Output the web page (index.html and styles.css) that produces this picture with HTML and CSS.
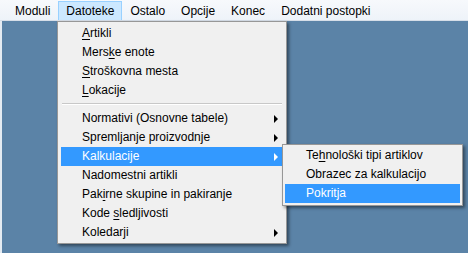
FILE: index.html
```html
<!DOCTYPE html>
<html lang="sl">
<head>
    <meta charset="UTF-8">
    <title>Datoteke</title>
    <link rel="stylesheet" href="styles.css">
</head>
<body>
    <div class="window">
        <div class="menubar">
            <span class="bar-item">Moduli</span>
            <span class="bar-item active">Datoteke</span>
            <span class="bar-item">Ostalo</span>
            <span class="bar-item">Opcije</span>
            <span class="bar-item">Konec</span>
            <span class="bar-item">Dodatni postopki</span>
        </div>
        <div class="desktop"></div>

        <div class="menu main-menu">
            <div class="item"><u>A</u>rtikli</div>
            <div class="item">Mers<u>k</u>e enote</div>
            <div class="item"><u>S</u>troškovna mesta</div>
            <div class="item"><u>L</u>okacije</div>
            <div class="separator"></div>
            <div class="item sub">Normativi (Osnovne tabele)</div>
            <div class="item sub">Spremljanje proizvodnje</div>
            <div class="item sub selected">Kalkulacije</div>
            <div class="item">Nadomestni artikli</div>
            <div class="item">Pak<u>i</u>rne skupine in pakiranje</div>
            <div class="item">Kode <u>s</u>ledljivosti</div>
            <div class="item sub">Koledarji</div>
        </div>

        <div class="menu sub-menu">
            <div class="item">Te<u>h</u>nološki tipi artiklov</div>
            <div class="item">Obrazec za kalkulacijo</div>
            <div class="item selected">Pokritja</div>
        </div>
    </div>
</body>
</html>
```
FILE: styles.css
```css
body {
    margin: 0;
    font-family: "Liberation Sans", Arial, sans-serif;
    font-size: 12px;
    color: #000;
}

.window {
    position: relative;
    width: 468px;
    height: 253px;
    display: flex;
    flex-direction: column;
    background: #5b83a7;
    overflow: hidden;
}

.menubar {
    height: 20px;
    display: flex;
    align-items: stretch;
    padding-left: 7px;
    background: linear-gradient(#f7f9fc, #eef3f9);
    border-bottom: 1px solid #d6dee8;
}

.bar-item {
    display: flex;
    align-items: center;
    padding: 0 7px;
    margin-top: 1px;
    border: 1px solid transparent;
    border-bottom: none;
}

.bar-item.active {
    background: #cce8ff;
    border-color: #99d1ff;
}

.desktop {
    flex: 1;
    border-left: 2px solid #e4ebf2;
}

/* popup menus */
.menu {
    position: absolute;
    background: #f0f0f0;
    border: 1px solid #979797;
    box-shadow: 2px 2px 3px rgba(0, 0, 0, 0.45);
}

.main-menu {
    left: 57px;
    top: 21px;
    width: 221px;
    padding: 2px 4px 1px 3px;
}

.sub-menu {
    left: 282px;
    top: 144px;
    width: 175px;
    padding: 1px 2px 2px 2px;
}

.item {
    position: relative;
    height: 19px;
    line-height: 19px;
    padding-left: 21px;
    white-space: nowrap;
}

.item u {
    text-decoration-thickness: 1px;
    text-underline-offset: 2px;
}

.item.selected {
    background: #3399ff;
    color: #fff;
}

.item.sub::after {
    content: "";
    position: absolute;
    right: 4px;
    top: 6px;
    border-left: 4px solid #000;
    border-top: 4px solid transparent;
    border-bottom: 4px solid transparent;
}

.item.sub.selected::after {
    border-left-color: #fff;
}

.separator {
    height: 1px;
    margin: 3px 0 4px 1px;
    background: #c8c8c8;
    border-bottom: 1px solid #fff;
}
```
